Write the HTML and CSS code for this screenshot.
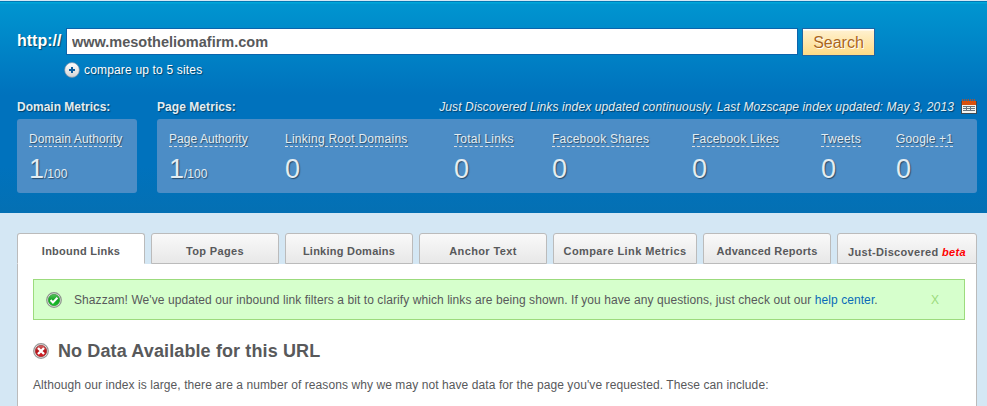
FILE: index.html
```html
<!DOCTYPE html>
<html lang="en">
<head>
<meta charset="utf-8">
<title>Link metrics</title>
<link rel="stylesheet" href="styles.css">
</head>
<body>
<header class="hero">
  <form class="search">
    <label class="scheme" for="site">http://</label>
    <input class="site" id="site" type="text" value="www.mesotheliomafirm.com">
    <button class="go" type="button">Search</button>
  </form>
  <div class="compare">
    <svg class="plus" width="16" height="16" viewBox="0 0 16 16">
      <defs><linearGradient id="pl" x1="0" y1="0" x2="0" y2="1"><stop offset="0" stop-color="#fff"/><stop offset="1" stop-color="#d4d4d4"/></linearGradient></defs>
      <circle cx="8" cy="8" r="7.4" fill="url(#pl)" stroke="#6f8aa5" stroke-width=".7"/>
      <path d="M8 5v6M5 8h6" stroke="#0b5c9c" stroke-width="2"/>
    </svg>
    <span class="compare-text">compare up to 5 sites</span>
  </div>
  <div class="captions">
    <b class="cap-domain">Domain Metrics:</b>
    <b class="cap-page">Page Metrics:</b>
    <i class="updated">Just Discovered Links index updated continuously. Last Mozscape index updated: May 3, 2013</i>
    <svg class="calendar" width="16" height="16" viewBox="0 0 16 16">
      <path d="M0 2h16v13H0z" fill="#3d4a52"/>
      <path d="M1 2h14v4H1z" fill="#d9500c"/>
      <path d="M1 6h14v8H1z" fill="#f4f4f0"/>
      <path d="M1.500 0v2M3.500 0v2M5.500 0v2M7.500 0v2M9.500 0v2M11.500 0v2M13.500 0v2" stroke="#a8502f"/>
      <path d="M2 7.500h12M2 9.500h12M2 11.500h12M5.500 7v5M9.500 7v5" stroke="#69757d"/>
    </svg>
  </div>
  <div class="cards">
    <section class="card card-domain">
      <div class="metric"><span class="name da">Domain Authority</span><div class="num">1<small>/100</small></div></div>
    </section>
    <section class="card card-page">
      <div class="metric"><span class="name pa">Page Authority</span><div class="num">1<small>/100</small></div></div>
      <div class="metric"><span class="name lrd">Linking Root Domains</span><div class="num">0</div></div>
      <div class="metric"><span class="name tl">Total Links</span><div class="num">0</div></div>
      <div class="metric"><span class="name fs">Facebook Shares</span><div class="num">0</div></div>
      <div class="metric"><span class="name fl">Facebook Likes</span><div class="num">0</div></div>
      <div class="metric"><span class="name tw">Tweets</span><div class="num">0</div></div>
      <div class="metric"><span class="name gp">Google +1</span><div class="num">0</div></div>
    </section>
  </div>
</header>
<main class="content">
  <nav class="tabs">
    <a class="tab active">Inbound Links</a>
    <a class="tab pages">Top Pages</a>
    <a class="tab">Linking Domains</a>
    <a class="tab anchor">Anchor Text</a>
    <a class="tab wide">Compare Link Metrics</a>
    <a class="tab">Advanced Reports</a>
    <a class="tab new">Just-Discovered&nbsp;<em>beta</em></a>
  </nav>
  <div class="panel">
    <div class="notice">
      <svg class="icon" width="16" height="16" viewBox="0 0 16 16">
        <defs><linearGradient id="gr" x1="0" y1="0" x2="0" y2="1"><stop offset="0" stop-color="#58c45c"/><stop offset=".5" stop-color="#12a422"/><stop offset="1" stop-color="#19c52b"/></linearGradient></defs>
        <circle cx="8" cy="8" r="7.300" fill="#e6ece4" stroke="#8d948c" stroke-width="1.200"/>
        <circle cx="8" cy="8" r="5.700" fill="url(#gr)" stroke="#21872a" stroke-width=".6"/>
        <path d="M4.600 8l2.300 2.400 4.500-4.600" fill="none" stroke="#fff" stroke-width="2.100"/>
      </svg>
      <span class="message">Shazzam! We've updated our inbound link filters a bit to clarify which links are being shown. If you have any questions, just check out our <a class="link">help center</a>.</span>
      <span class="close">X</span>
    </div>
    <h1 class="title">
      <svg class="icon" width="16" height="16" viewBox="0 0 16 16">
        <defs><linearGradient id="rd" x1="0" y1="0" x2="0" y2="1"><stop offset="0" stop-color="#d66b6b"/><stop offset=".5" stop-color="#b51218"/><stop offset="1" stop-color="#d92027"/></linearGradient></defs>
        <circle cx="8" cy="8" r="7.300" fill="#ececec" stroke="#979797" stroke-width="1.200"/>
        <circle cx="8" cy="8" r="5.700" fill="url(#rd)" stroke="#8e1a1c" stroke-width=".6"/>
        <path d="M5 5l6 6M11 5l-6 6" stroke="#fff" stroke-width="2.400"/>
      </svg>
      <span class="title-text">No Data Available for this URL</span>
    </h1>
    <p class="intro">Although our index is large, there are a number of reasons why we may not have data for the page you've requested. These can include:</p>
  </div>
</main>
</body>
</html>
```
FILE: styles.css
```css
* { box-sizing: border-box; }
body {
  margin: 0;
  height: 406px;
  overflow: hidden;
  background: #d4e7f4;
  font: 12px/16px "Liberation Sans", Arial, sans-serif;
  color: #58595b;
  white-space: nowrap;
}
svg { display: block; flex: none; }

.hero {
  height: 213px;
  padding: 25px 10px 0 17px;
  border-top: 1px solid #d4e7f4;
  background: linear-gradient(#0078b4 0 1px, #00a7d9 1px 2px, #0095d0 3px, #0072bd 94px, #0072bd 165px, #0470b3 212px);
  color: #e3edf2;
  text-shadow: 1px 1px 1px rgba(0, 0, 0, .45);
}
.search { display: flex; align-items: flex-start; margin: 0; padding-top: 2px; height: 34px; }
.scheme { width: 49px; font: bold 16px/26px "Liberation Sans", Arial, sans-serif; color: #fff; }
.site {
  width: 732px;
  height: 27px;
  padding: 0 5px;
  border: 1px solid #0b64ac;
  font: bold 14.5px/24px "Liberation Sans", Arial, sans-serif;
  color: #58595b;
}
.go {
  width: 73px;
  height: 28px;
  margin-left: 4px;
  padding: 1px 0 0;
  border: 1px solid #2166a3;
  background: linear-gradient(#fff 0 1px, #fff0cd 2px, #fedb85);
  font: 16px/24px "Liberation Sans", Arial, sans-serif;
  color: #a9661f;
  text-shadow: 1px 1px 0 #fff;
}
.compare { display: flex; align-items: center; height: 20px; padding-left: 47px; color: #fff; }
.compare-text { margin-left: 4px; letter-spacing: .17px; }
.captions { display: flex; align-items: center; height: 16px; margin-top: 18px; padding-top: 1px; }
.cap-domain { width: 140px; }
.cap-page { letter-spacing: .06px; }
.updated { margin-left: auto; letter-spacing: .127px; }
.calendar { margin-left: 7px; }
.cards { display: flex; gap: 20px; margin-top: 5px; }
.card { height: 74px; padding: 12px 12px 0; border-radius: 3px; background: #4c8dc6; }
.card-domain { width: 120px; }
.card-page { display: grid; flex: 1; grid-template-columns: 116px 169px 98px 140px 129px 75px 1fr; }
.name { display: inline-block; height: 16px; border-bottom: 1px dashed #dcdcdc; line-height: 16px; }
.da { letter-spacing: .12px; }
.pa { letter-spacing: .05px; }
.lrd { letter-spacing: .26px; }
.tl { letter-spacing: .27px; }
.fs, .fl { letter-spacing: .21px; }
.tw { letter-spacing: .33px; }
.gp { letter-spacing: .15px; }
.num { margin-top: 7px; font-size: 27px; line-height: 30px; }
.num small { font-size: 12px; }

.content { padding: 20px 10px 0 17px; }
.tabs { display: flex; gap: 6px; }
.tab {
  display: flex;
  width: 128px;
  height: 31px;
  padding-top: 4px;
  align-items: center;
  justify-content: center;
  border: 1px solid #bbb;
  border-radius: 3px 3px 0 0;
  background: linear-gradient(#f9f9f9, #e8e8e8);
  font-size: 11px;
  font-weight: bold;
  letter-spacing: .24px;
}
.tab.pages { letter-spacing: .35px; }
.tab.anchor { letter-spacing: .38px; }
.tab.wide { width: 144px; letter-spacing: .4px; }
.tab.new { width: 140px; padding-top: 6px; letter-spacing: .33px; }
.tab.active { background: #fff; border-bottom-color: #fff; }
.tab em { color: #f00; }
.panel {
  height: 160px;
  padding: 15px 11px 0 15px;
  border: solid #bbb;
  border-width: 0 1px;
  background: #fff;
}
.notice {
  display: flex;
  align-items: center;
  height: 41px;
  padding: 0 25px 0 12px;
  border: 1px solid #9cdb7d;
  background: #d6ffcc;
}
.message { margin-left: 12px; letter-spacing: .078px; }
.link { color: #0a6bb8; }
.close { margin-left: auto; color: #9cdb7d; }
.title { display: flex; align-items: center; height: 24px; margin: 19px 0 0; font-size: 18px; }
.title-text { margin-left: 9px; letter-spacing: .12px; }
.intro { margin: 14px 0 0; letter-spacing: .083px; }
```
